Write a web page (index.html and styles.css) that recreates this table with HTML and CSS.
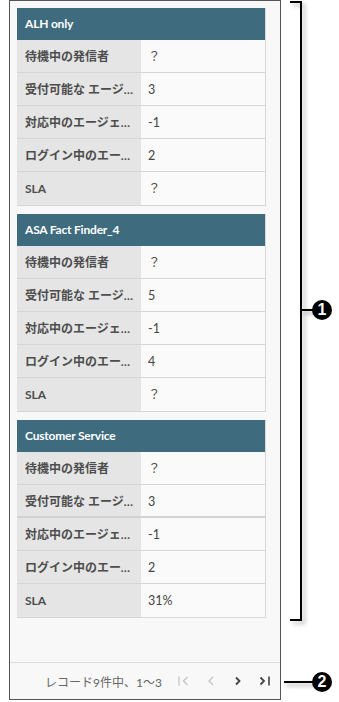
FILE: index.html
```html
<!DOCTYPE html>
<html lang="ja">
<head>
<meta charset="utf-8">
<link rel="stylesheet" href="styles.css">
</head>
<body>
<div class="stage">
  <div class="frame">
    <div class="list">
      <div class="card">
        <div class="card-head">ALH only</div>
        <div class="row"><div class="lbl">待機中の発信者</div><div class="val q">？</div></div>
        <div class="row"><div class="lbl">受付可能な エージェント</div><div class="val">3</div></div>
        <div class="row"><div class="lbl">対応中のエージェント</div><div class="val">-1</div></div>
        <div class="row"><div class="lbl">ログイン中のエージェント</div><div class="val">2</div></div>
        <div class="row"><div class="lbl">SLA</div><div class="val q">？</div></div>
      </div>
      <div class="card">
        <div class="card-head">ASA Fact Finder_4</div>
        <div class="row"><div class="lbl">待機中の発信者</div><div class="val q">？</div></div>
        <div class="row"><div class="lbl">受付可能な エージェント</div><div class="val">5</div></div>
        <div class="row"><div class="lbl">対応中のエージェント</div><div class="val">-1</div></div>
        <div class="row"><div class="lbl">ログイン中のエージェント</div><div class="val">4</div></div>
        <div class="row"><div class="lbl">SLA</div><div class="val q">？</div></div>
      </div>
      <div class="card">
        <div class="card-head">Customer Service</div>
        <div class="row"><div class="lbl">待機中の発信者</div><div class="val q">？</div></div>
        <div class="row row-thick"><div class="lbl">受付可能な エージェント</div><div class="val">3</div></div>
        <div class="row"><div class="lbl">対応中のエージェント</div><div class="val">-1</div></div>
        <div class="row"><div class="lbl">ログイン中のエージェント</div><div class="val">2</div></div>
        <div class="row"><div class="lbl">SLA</div><div class="val">31%</div></div>
      </div>
    </div>
    <div class="pager">
      <span class="pager-text">レコード9件中、1～3</span>
      <span class="pg off"><svg width="12" height="10" viewBox="0 0 12 10"><path d="M1 0.5V9.5" stroke="currentColor" stroke-width="1.3" fill="none"/><path d="M9.5 1L5.5 5L9.5 9" stroke="currentColor" stroke-width="1.3" fill="none"/></svg></span>
      <span class="pg off"><svg width="8" height="10" viewBox="0 0 8 10"><path d="M6 1L2 5L6 9" stroke="currentColor" stroke-width="1.3" fill="none"/></svg></span>
      <span class="pg on"><svg width="8" height="10" viewBox="0 0 8 10"><path d="M2 1.5L5.5 5L2 8.5" stroke="currentColor" stroke-width="1.8" fill="none"/></svg></span>
      <span class="pg on"><svg width="12" height="10" viewBox="0 0 12 10"><path d="M1.5 1.5L5 5L1.5 8.5" stroke="currentColor" stroke-width="1.8" fill="none"/><path d="M10 0.5V9.5" stroke="currentColor" stroke-width="1.6" fill="none"/></svg></span>
    </div>
  </div>
  <div class="bracket"></div>
  <div class="tick tick-1"></div>
  <div class="badge badge-1">1</div>
  <div class="tick tick-2"></div>
  <div class="badge badge-2">2</div>
</div>
</body>
</html>
```
FILE: styles.css
```css
html, body {
  margin: 0;
  padding: 0;
  background: #ffffff;
}
body {
  font-family: Lato, "Noto Sans CJK JP", sans-serif;
  font-size: 12px;
}
.stage {
  position: relative;
  width: 339px;
  height: 702px;
}
.frame {
  margin-left: 9px;
  width: 270px;
  height: 698px;
  border: 1px solid #555555;
  background: #f8f8f8;
  display: flex;
  flex-direction: column;
}
.list {
  flex: 1;
  padding: 7px 14px 0 7px;
  display: flex;
  flex-direction: column;
  gap: 8px;
}
.card {
  border-right: 1px solid #d6d6d6;
  border-bottom: 1px solid #d6d6d6;
}
.card-head {
  height: 32px;
  background: #3e6b7d;
  color: #ffffff;
  font-weight: 700;
  font-size: 12px;
  line-height: 32px;
  padding-left: 8px;
  letter-spacing: -0.2px;
}
.row {
  display: flex;
  height: 32px;
  border-bottom: 1px solid #d6d6d6;
}
.row:last-child {
  border-bottom: none;
  height: 33px;
}
.row-thick {
  border-bottom: 2px solid #d2d2d2;
  height: 31px;
}
.lbl {
  width: 124px;
  flex: none;
  background: #e5e5e5;
  color: #4d4d4d;
  font-weight: 700;
  padding: 1px 6px 0 8px;
  box-sizing: border-box;
  line-height: 32px;
  white-space: nowrap;
  overflow: hidden;
  text-overflow: ellipsis;
}
.val {
  flex: 1;
  background: #fafafa;
  color: #444444;
  padding: 1px 0 0 7px;
  line-height: 32px;
  font-size: 12.5px;
}
.val.q {
  color: #555555;
}
.pager {
  height: 36px;
  border-top: 1px solid #dddddd;
  display: flex;
  align-items: center;
  justify-content: flex-end;
  padding-right: 2px;
  color: #666666;
}
.pager-text {
  margin-right: 8px;
  font-size: 12px;
  color: #666666;
}
.pg {
  width: 27px;
  display: flex;
  justify-content: center;
  align-items: center;
}
.pg.off { color: #c4c4c4; }
.pg.on { color: #444444; }
.bracket {
  position: absolute;
  left: 290px;
  top: 1px;
  width: 10px;
  height: 616px;
  border: 2px solid #000000;
  border-left: none;
  filter: drop-shadow(3px 3px 2px rgba(0,0,0,0.3));
}
.tick {
  position: absolute;
  height: 2px;
  background: #000000;
  filter: drop-shadow(2px 3px 2px rgba(0,0,0,0.35));
}
.tick-1 { left: 302px; top: 309px; width: 12px; }
.tick-2 { left: 284px; top: 681px; width: 30px; }
.badge {
  position: absolute;
  width: 20px;
  height: 20px;
  border-radius: 50%;
  background: #000000;
  color: #ffffff;
  font-family: "Liberation Sans", Arial, sans-serif;
  font-weight: 700;
  font-size: 16px;
  line-height: 20px;
  text-align: center;
}
.badge-1 { left: 312px; top: 300px; }
.badge-2 { left: 312px; top: 672px; }
```
